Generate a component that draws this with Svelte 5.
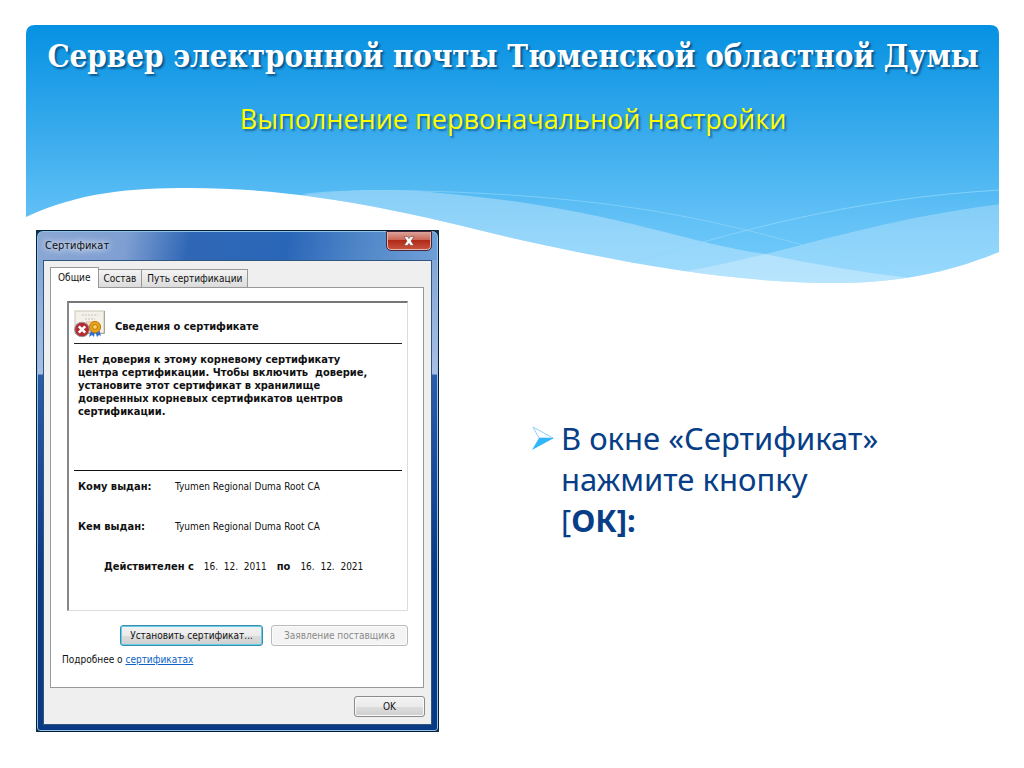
<script>
	let tab = $state('general');

	const tabs = [
		{ id: 'general', label: 'Общие' },
		{ id: 'details', label: 'Состав' },
		{ id: 'path', label: 'Путь сертификации' }
	];

	const names = [
		{ label: 'Кому выдан:', value: 'Tyumen Regional Duma Root CA' },
		{ label: 'Кем выдан:', value: 'Tyumen Regional Duma Root CA' }
	];
</script>

<div class="slide">
	<header>
		<svg class="waves" viewBox="26 25 974 260" preserveAspectRatio="none" aria-hidden="true">
			<defs>
				<linearGradient id="sky" x1="0" y1="0" x2="0" y2="1">
					<stop offset="0" stop-color="#0591e2" />
					<stop offset="0.4" stop-color="#37aaec" />
					<stop offset="0.75" stop-color="#62c1f6" />
					<stop offset="1" stop-color="#78cefd" />
				</linearGradient>
				<clipPath id="banner">
					<path d="M26 217V34Q26 25 35 25H990Q999 25 999 34V252C950 272 900 283 835 283C730 283 620 262 512 238C400 210 300 188 190 188C130 188 80 192 26 217Z" />
				</clipPath>
			</defs>
			<g clip-path="url(#banner)">
				<rect x="26" y="25" width="974" height="260" fill="url(#sky)" />
				<path d="M300 195Q380 186 440 193C610 208 680 242 765 254Q840 270 910 278L835 290L500 250Z" fill="#fff" opacity="0.3" />
				<path d="M680 272C780 256 860 222 1000 204V285H680Z" fill="#fff" opacity="0.25" />
				<path d="M305 194Q350 189 420 191C620 196 720 222 810 247Q870 265 916 278" fill="none" stroke="#8fd6fb" opacity="0.7" />
				<path d="M625 265C740 230 850 199 1000 190" fill="none" stroke="#8fd6fb" opacity="0.8" />
			</g>
		</svg>
		<h1>Сервер электронной почты Тюменской областной Думы</h1>
		<h2>Выполнение первоначальной настройки</h2>
	</header>

	<main>
		<div class="backdrop">
			<section class="window" aria-label="Сертификат">
				<div class="titlebar">
					<span class="caption">Сертификат</span>
					<button class="close" aria-label="Закрыть">
						<svg width="12" height="10" viewBox="0 0 12 10">
							<path d="M1 0.6H4.4L6 2.6L7.6 0.6H11L8 5L11 9.4H7.6L6 7.4L4.4 9.4H1L4 5Z" fill="#fff" stroke="#6b3a3a" stroke-width="0.6" />
						</svg>
					</button>
				</div>
				<div class="client">
					<div class="tabs" role="tablist">
						{#each tabs as t}
							<button role="tab" class:active={tab === t.id} aria-selected={tab === t.id} onclick={() => (tab = t.id)}>{t.label}</button>
						{/each}
					</div>
					<div class="panel">
						<div class="info">
							<div class="info-head">
								<svg width="34" height="30" viewBox="0 0 34 30" aria-hidden="true">
									<rect x="1" y="1" width="29" height="22" fill="#f4f1e8" stroke="#c9c5b8" />
									<path d="M1 23.5H30.5V1" fill="none" stroke="#a9a598" />
									<path d="M8 5H24M11 9H21" stroke="#c5c5c5" stroke-dasharray="2 1" />
									<path d="M12 12H20" stroke="#f0ad74" />
									<path d="M6 14H25" stroke="#ddd" />
									<path d="M17 20L15 27L18 25L20 27L21 21ZM21 21L23 27L25 25L27 26L25 19Z" fill="#2d6ed0" />
									<circle cx="21" cy="17" r="5.6" fill="#e9a21c" stroke="#c17c0a" />
									<circle cx="21" cy="17" r="2.4" fill="#fbd873" stroke="#b87508" />
									<circle cx="8" cy="19.5" r="7.3" fill="#b52b33" stroke="#999" />
									<path d="M4.8 16.3L11.2 22.7M11.2 16.3L4.8 22.7" stroke="#fff" stroke-width="2.6" />
								</svg>
								<strong>Сведения о сертификате</strong>
							</div>
							<p class="warning">
								Нет доверия к этому корневому сертификату<br />
								центра сертификации. Чтобы включить&nbsp; доверие,<br />
								установите этот сертификат в хранилище<br />
								доверенных корневых сертификатов центров<br />
								сертификации.
							</p>
							<dl>
								{#each names as n}
									<div>
										<dt>{n.label}</dt>
										<dd>{n.value}</dd>
									</div>
								{/each}
							</dl>
							<p class="valid">
								<b>Действителен с</b>
								<span>16.&nbsp; 12.&nbsp; 2011</span>
								<b>по</b>
								<span>16.&nbsp; 12.&nbsp; 2021</span>
							</p>
						</div>
						<div class="actions">
							<button class="btn default">Установить сертификат...</button>
							<button class="btn" disabled>Заявление поставщика</button>
						</div>
						<p class="more">Подробнее о <a href="#certificates">сертификатах</a></p>
					</div>
					<div class="footer">
						<button class="btn ok">OK</button>
					</div>
				</div>
			</section>
		</div>

		<ul class="steps">
			<li>
				<svg width="22" height="24" viewBox="0 0 22 24" aria-hidden="true">
					<path d="M1 1L21 12H7Z" fill="#fff" stroke="#8fd0f5" />
					<path d="M7 12H22L0 24Z" fill="#31b6fd" />
				</svg>
				<span>В окне «Сертификат»<br />нажмите кнопку<br />[<b>ОК]:</b></span>
			</li>
		</ul>
	</main>
</div>

<style>
	:global(body) {
		margin: 0;
		background: #fff;
	}

	h1, h2, p, dl, dd, ul {
		margin: 0;
		padding: 0;
	}

	.slide {
		padding: 25px 24px 37px 26px;
	}

	header {
		position: relative;
		height: 205px;
		text-align: center;
	}

	.waves {
		position: absolute;
		top: 0;
		left: 0;
		width: 100%;
		height: 260px;
	}

	h1 {
		position: relative;
		padding-top: 10px;
		font: bold 31px/42px "DejaVu Serif Condensed", "DejaVu Serif", serif;
		color: #fff;
		white-space: nowrap;
		text-shadow: 2px 2px 2px rgba(0, 40, 80, 0.6);
	}

	h2 {
		position: relative;
		padding-top: 22px;
		font: 27px/40px "Open Sans", "Noto Sans", sans-serif;
		color: #ff0;
		text-shadow: 2px 2px 2px rgba(0, 40, 80, 0.5);
	}

	main {
		position: relative;
		display: flex;
		align-items: flex-start;
		padding-left: 10px;
	}

	.backdrop {
		flex: 0 0 403px;
		background: #12304a;
	}

	.window {
		box-sizing: border-box;
		padding: 0 6px 6px;
		border: 1px solid #0a1c33;
		border-radius: 7px 7px 4px 4px;
		box-shadow: inset 0 0 0 1px #8fc4ea;
		background: linear-gradient(#7b9fd2, #a9bfe4 143px, #2b5ca8 144px, #0b3a85 340px, #0b3a85);
		font: 10px/13px "DejaVu Sans Condensed", "DejaVu Sans", sans-serif;
		color: #111;
	}

	.titlebar {
		display: flex;
		justify-content: space-between;
		height: 28px;
		margin: 1px -5px 0;
		padding: 0 6px 0 7px;
		border-radius: 6px 6px 0 0;
		background: linear-gradient(100deg, #8aa6d4, #7f9fd2 22%, #2f67b5 38%, #2a66b8 62%, #4f86c8 80%, #6f9fd6);
	}

	.caption {
		padding-top: 7px;
		font-size: 11px;
		text-shadow: 0 0 6px #fff, 0 0 10px #fff;
	}

	.close {
		display: flex;
		align-items: center;
		justify-content: center;
		width: 44px;
		height: 18px;
		padding: 0;
		border: 1px solid #e3b5b0;
		border-top: 0;
		border-radius: 0 0 4px 4px;
		outline: 1px solid #4a2733;
		background: linear-gradient(#dba49b, #cb6757 45%, #b02a18 50%, #c8503c);
	}

	.client {
		padding: 6px 6px 7px;
		border: 1px solid #30557f;
		background: #efefef;
	}

	.tabs {
		display: flex;
		align-items: flex-end;
	}

	.tabs button {
		height: 18px;
		padding: 0 5px;
		border: 1px solid #989898;
		border-left: 0;
		border-bottom: 0;
		background: linear-gradient(#f3f3f3, #dcdcdc);
		font: inherit;
		color: #111;
	}

	.tabs .active {
		z-index: 1;
		height: 21px;
		margin-bottom: -1px;
		padding: 0 7px 2px;
		border-left: 1px solid #989898;
		background: #fff;
	}

	.panel {
		margin-right: 1px;
		padding: 13px 15px 21px 11px;
		border: 1px solid #989898;
		background: #fff;
	}

	.info {
		height: 307px;
		margin-left: 5px;
		padding: 0 5px;
		border: 1px solid #dcdcdc;
		border-top: 2px solid #777;
		border-left: 2px solid #888;
	}

	.info b, .info strong, .info dt, .warning {
		font-size: 11px;
	}

	.info-head {
		display: flex;
		gap: 7px;
		height: 33px;
		padding-top: 7px;
		border-bottom: 1px solid #222;
	}

	.info-head strong {
		padding-top: 10px;
	}

	.warning {
		height: 117px;
		padding: 9px 0 0 4px;
		border-bottom: 1px solid #111;
		font-weight: bold;
		line-height: 13px;
		white-space: nowrap;
	}

	dl {
		padding: 9px 0 0 4px;
	}

	dl div {
		display: flex;
		height: 40px;
	}

	dt {
		width: 97px;
		font-weight: bold;
	}

	.valid {
		display: flex;
		gap: 10px;
		padding-left: 30px;
		white-space: nowrap;
	}

	.actions {
		display: flex;
		justify-content: flex-end;
		gap: 8px;
		padding-top: 14px;
	}

	.btn {
		width: 137px;
		height: 21px;
		padding: 0;
		border: 1px solid #8a8a8a;
		border-radius: 3px;
		box-shadow: inset 0 0 0 1px #fafafa;
		background: linear-gradient(#f2f2f2, #ebebeb 50%, #dddddd 50%, #cfcfcf);
		font: inherit;
		color: #111;
		white-space: nowrap;
	}

	.btn.default {
		width: 143px;
		border-color: #3b8fab;
		box-shadow: inset 0 0 0 1px #62cdea;
	}

	.btn:disabled {
		border-color: #bbb;
		background: #f4f4f4;
		color: #8a8a8a;
	}

	.btn.ok {
		width: 71px;
	}

	.more {
		padding-top: 7px;
	}

	.more a {
		color: #0c63c7;
	}

	.footer {
		display: flex;
		justify-content: flex-end;
		padding-top: 8px;
	}

	.steps {
		flex: 1;
		padding: 188px 0 0 93px;
		list-style: none;
		font: 31px/41px "Noto Sans", sans-serif;
		color: #073e87;
	}

	.steps li {
		display: flex;
		gap: 7px;
	}

	.steps svg {
		flex: none;
		margin-top: 8px;
	}
</style>
